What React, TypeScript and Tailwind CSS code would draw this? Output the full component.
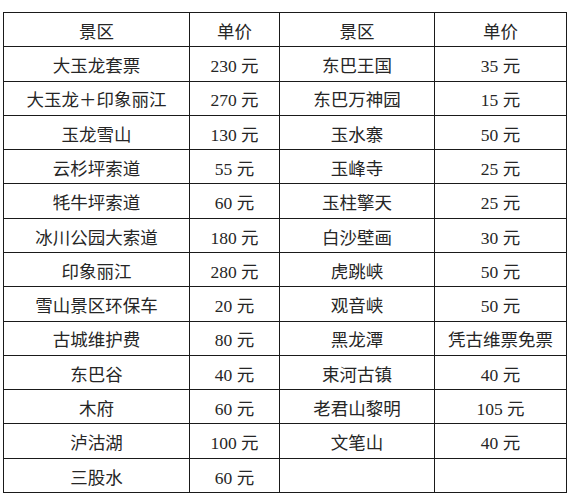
const rows: [string, string, string, string][] = [
  ['大玉龙套票', '230 元', '东巴王国', '35 元'],
  ['大玉龙＋印象丽江', '270 元', '东巴万神园', '15 元'],
  ['玉龙雪山', '130 元', '玉水寨', '50 元'],
  ['云杉坪索道', '55 元', '玉峰寺', '25 元'],
  ['牦牛坪索道', '60 元', '玉柱擎天', '25 元'],
  ['冰川公园大索道', '180 元', '白沙壁画', '30 元'],
  ['印象丽江', '280 元', '虎跳峡', '50 元'],
  ['雪山景区环保车', '20 元', '观音峡', '50 元'],
  ['古城维护费', '80 元', '黑龙潭', '凭古维票免票'],
  ['东巴谷', '40 元', '束河古镇', '40 元'],
  ['木府', '60 元', '老君山黎明', '105 元'],
  ['泸沽湖', '100 元', '文笔山', '40 元'],
  ['三股水', '60 元', '', ''],
];

const cell = 'h-[34.29px] border border-[#1a1a1a] p-0 pt-[6px] text-center align-middle leading-none';

export default function App() {
  return (
    <div className="h-[500px] w-[573px] bg-white pl-[3px] pt-[12px] font-['Liberation_Serif','Noto_Sans_CJK_SC',serif] text-[17.5px] text-[#262626]">
      <table className="w-[563px] table-fixed border-collapse">
        <colgroup>
          <col className="w-[186px]" />
          <col className="w-[90px]" />
          <col className="w-[155px]" />
          <col className="w-[132px]" />
        </colgroup>
        <thead>
          <tr>
            <th className={`${cell} font-normal`}>景区</th>
            <th className={`${cell} font-normal`}>单价</th>
            <th className={`${cell} font-normal`}>景区</th>
            <th className={`${cell} font-normal`}>单价</th>
          </tr>
        </thead>
        <tbody>
          {rows.map((r, i) => (
            <tr key={i}>
              {r.map((c, j) => (
                <td key={j} className={cell}>
                  {c}
                </td>
              ))}
            </tr>
          ))}
        </tbody>
      </table>
    </div>
  );
}
